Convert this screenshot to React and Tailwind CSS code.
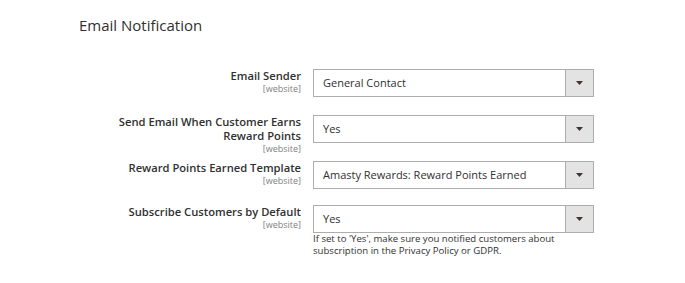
const ROWS = [
  { label: ['Email Sender'], value: 'General Contact', mt: 'mt-0' },
  { label: ['Send Email When Customer Earns', 'Reward Points'], value: 'Yes', mt: 'mt-[18px]' },
  { label: ['Reward Points Earned Template'], value: 'Amasty Rewards: Reward Points Earned', mt: 'mt-[7px]' },
  {
    label: ['Subscribe Customers by Default'],
    value: 'Yes',
    mt: 'mt-[16px]',
    note: ["If set to 'Yes', make sure you notified customers about", 'subscription in the Privacy Policy or GDPR.'],
  },
];

function Select({ value }) {
  return (
    <div className="flex h-[28px] w-[281px] border border-[#adadad] bg-white">
      <div className="flex flex-1 items-center pl-[9px] text-[11px] text-[#303030]">{value}</div>
      <div className="flex w-[28px] items-center justify-center border-l border-[#adadad] bg-[#e3e3e3]">
        <svg width="7" height="4" viewBox="0 0 7 4">
          <path d="M0 0h7L3.5 4z" fill="#41362f" />
        </svg>
      </div>
    </div>
  );
}

export default function App() {
  return (
    <div className="h-[283px] w-[685px] bg-white pl-[79px] pt-[15px] text-[#303030]" style={{ fontFamily: '"Open Sans", sans-serif' }}>
      <h2 className="text-[15px] leading-[20px] font-normal">Email Notification</h2>

      <div className="mt-[34px] flex flex-col pl-[32px]">
        {ROWS.map((row, i) => (
          <div key={i} className={`flex items-start gap-[12px] ${row.mt}`}>
            <div className="flex w-[190px] flex-col items-end text-right">
              {row.label.map(l => (
                <span key={l} className="text-[11.2px] leading-[14px] font-semibold">{l}</span>
              ))}
              <span className="text-[9px] leading-[11px] text-[#808080]">[website]</span>
            </div>
            <div className="flex flex-col">
              <Select value={row.value} />
              {row.note && (
                <p className="text-[9.6px] leading-[12px]">
                  {row.note[0]}
                  <br />
                  {row.note[1]}
                </p>
              )}
            </div>
          </div>
        ))}
      </div>
    </div>
  );
}
